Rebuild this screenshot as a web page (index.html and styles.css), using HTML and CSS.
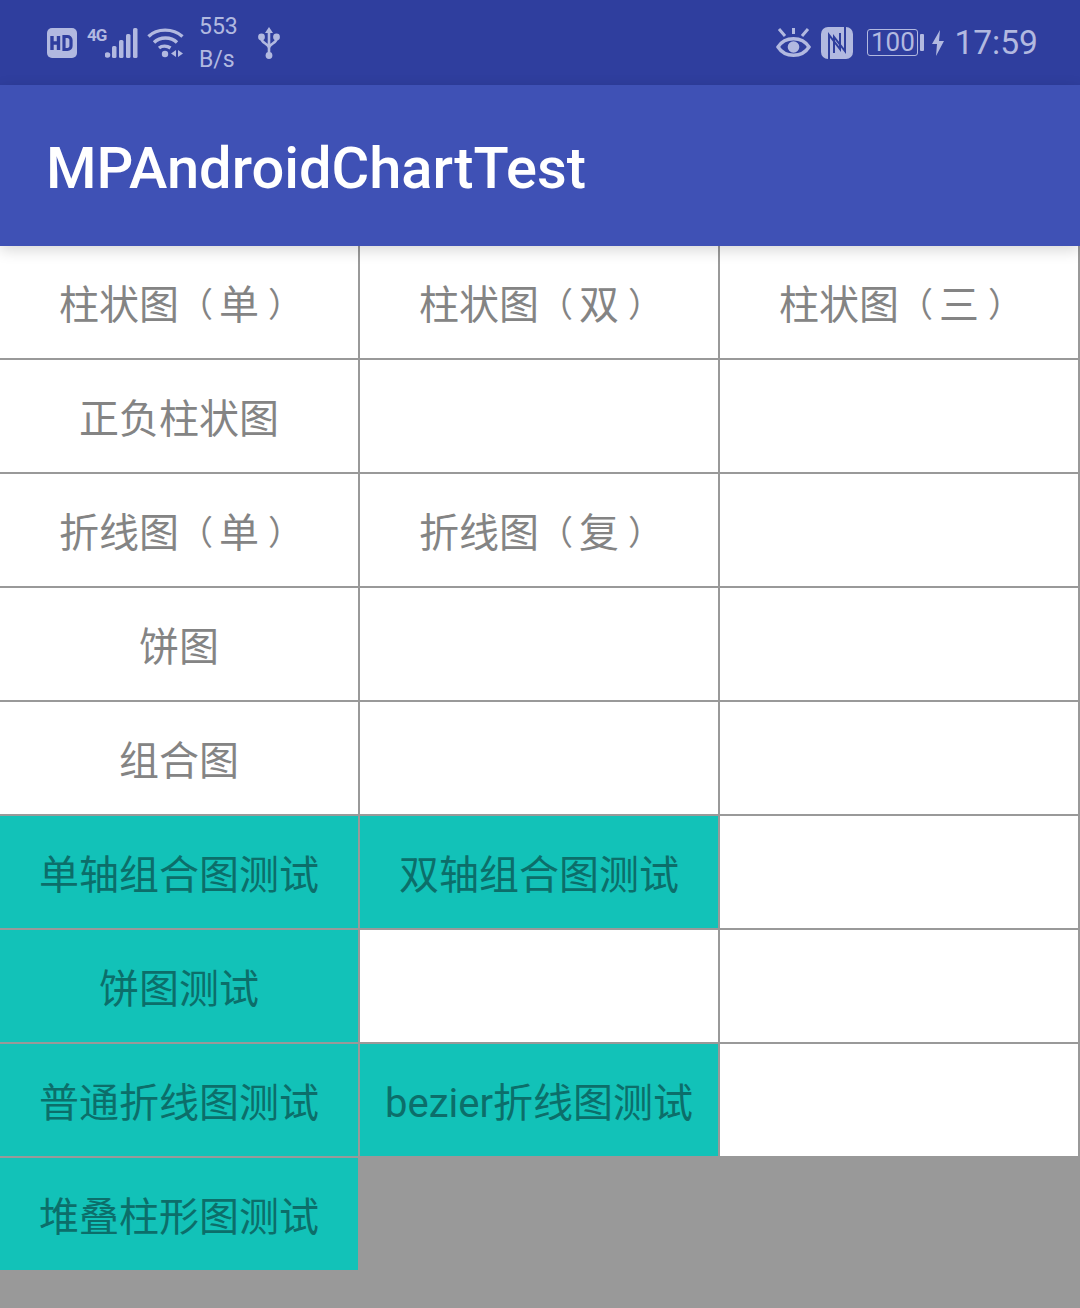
FILE: index.html
```html
<!DOCTYPE html>
<html lang="zh-CN">
<head>
    <meta charset="UTF-8">
    <title>MPAndroidChartTest</title>
    <link rel="stylesheet" href="styles.css">
</head>
<body>
    <div class="status-bar">
        <div class="status-left">
            <svg class="icon-hd" width="30" height="30" viewBox="0 0 30 30">
                <rect width="30" height="30" rx="5" fill="#b2b9e0"/>
                <path d="M5 8v14M11.500 8v14M5 15h6" stroke="#2f3e9e" stroke-width="3.400" fill="none"/>
                <path d="M17 8.500v13h3.500a3.500 3.500 0 0 0 3.500-3.500v-6a3.500 3.500 0 0 0-3.500-3.500z" stroke="#2f3e9e" stroke-width="3.200" fill="none"/>
            </svg>
            <div class="signal">
                <span class="net-type">4G</span>
                <svg class="bars" width="33" height="30" viewBox="0 0 33 30">
                    <circle cx="2.500" cy="27" r="2.800" fill="#b2b9e0"/>
                    <rect x="7" y="18" width="4.500" height="12" rx="1.500" fill="#b2b9e0"/>
                    <rect x="14" y="12" width="4.500" height="18" rx="1.500" fill="#b2b9e0"/>
                    <rect x="21" y="6" width="4.500" height="24" rx="1.500" fill="#b2b9e0"/>
                    <rect x="28" y="0" width="4.500" height="30" rx="1.500" fill="#b2b9e0"/>
                </svg>
            </div>
            <svg class="wifi" width="37" height="31" viewBox="0 0 37 31">
                <path d="M1.500 9.500C10 1 26 1 35.500 9.500M7 15.500C13 9.500 24 9.500 30 15.500M12 21C15 18.500 20 18.500 23.500 21" stroke="#b2b9e0" stroke-width="3.400" fill="none"/>
                <circle cx="18" cy="27" r="3.200" fill="#b2b9e0"/>
                <path d="M29 23v7l-5-3.500zM31 23v7l5-3.500z" fill="#b2b9e0"/>
            </svg>
            <div class="speed">
                <span>553</span>
                <span>B/s</span>
            </div>
            <svg class="usb" width="22" height="32" viewBox="0 0 22 32">
                <path d="M11 0l4 6h-8z" fill="#b2b9e0"/>
                <path d="M11 5v24M3.500 10v2c0 4 7.500 5 7.500 9M18.500 10v2c0 4-7.500 5-7.500 9" stroke="#b2b9e0" stroke-width="2.600" fill="none"/>
                <circle cx="3.500" cy="10" r="3.400" fill="#b2b9e0"/>
                <circle cx="18.500" cy="10" r="3.400" fill="#b2b9e0"/>
                <circle cx="11" cy="28.500" r="3.400" fill="#b2b9e0"/>
            </svg>
        </div>
        <div class="status-right">
            <svg class="eye" width="35" height="29" viewBox="0 0 35 29">
                <path d="M2 19C9 8 26 8 33 19C26 30 9 30 2 19Z" stroke="#b2b9e0" stroke-width="3.400" fill="none"/>
                <circle cx="17.500" cy="19" r="5.800" fill="#b2b9e0"/>
                <path d="M3 1l6 7M32 1l-6 7M17.500 0v6" stroke="#b2b9e0" stroke-width="3" fill="none"/>
            </svg>
            <svg class="nfc" width="32" height="32" viewBox="0 0 32 32">
                <rect width="32" height="32" rx="7" fill="#b2b9e0"/>
                <path d="M8 32V8L19 22V6M24 0V24L13 10V26" stroke="#2f3e9e" stroke-width="2" fill="none"/>
            </svg>
            <div class="battery">
                <div class="battery-body">100</div>
                <div class="battery-tip"></div>
            </div>
            <svg class="bolt" width="12" height="26" viewBox="0 0 12 26">
                <path d="M8 0L0 14h5L4 26l8-15H7z" fill="#b2b9e0"/>
            </svg>
            <span class="clock">17:59</span>
        </div>
    </div>

    <header class="app-bar">MPAndroidChartTest</header>

    <main class="grid">
        <div class="cell">柱状图<span class="paren-open">（</span>单<span class="paren-close">）</span></div>
        <div class="cell">柱状图<span class="paren-open">（</span>双<span class="paren-close">）</span></div>
        <div class="cell">柱状图<span class="paren-open">（</span>三<span class="paren-close">）</span></div>
        <div class="cell">正负柱状图</div>
        <div class="cell"></div>
        <div class="cell"></div>
        <div class="cell">折线图<span class="paren-open">（</span>单<span class="paren-close">）</span></div>
        <div class="cell">折线图<span class="paren-open">（</span>复<span class="paren-close">）</span></div>
        <div class="cell"></div>
        <div class="cell">饼图</div>
        <div class="cell"></div>
        <div class="cell"></div>
        <div class="cell">组合图</div>
        <div class="cell"></div>
        <div class="cell"></div>
        <div class="cell teal">单轴组合图测试</div>
        <div class="cell teal">双轴组合图测试</div>
        <div class="cell"></div>
        <div class="cell teal">饼图测试</div>
        <div class="cell"></div>
        <div class="cell"></div>
        <div class="cell teal">普通折线图测试</div>
        <div class="cell teal">bezier折线图测试</div>
        <div class="cell"></div>
        <div class="cell teal">堆叠柱形图测试</div>
    </main>
</body>
</html>
```

FILE: styles.css
```css
html, body {
    margin: 0;
    padding: 0;
}

body {
    width: 1080px;
    height: 1308px;
    overflow: hidden;
    background-color: #999999;
    font-family: Roboto, "Noto Sans CJK SC", sans-serif;
}

.status-bar {
    height: 85px;
    background-color: #2f3e9e;
    color: #b2b9e0;
    display: flex;
    justify-content: space-between;
    align-items: center;
    padding: 0 42px 0 47px;
}

.status-left,
.status-right {
    display: flex;
    align-items: center;
}

.signal {
    display: flex;
    align-items: flex-start;
    margin-left: 10px;
}

.net-type {
    width: 18px;
    font-size: 17px;
    font-weight: 700;
    letter-spacing: -1px;
    line-height: 14px;
}

.wifi {
    margin-left: 9px;
}

.speed {
    display: flex;
    flex-direction: column;
    width: 37px;
    font-size: 23px;
    line-height: 33px;
    margin-left: 15px;
}

.usb {
    margin-left: 22px;
}

.eye {
    margin-right: 10px;
}

.battery {
    display: flex;
    align-items: center;
    margin-left: 14px;
}

.battery-body {
    width: 49px;
    height: 25px;
    border: 1px solid #b2b9e0;
    border-radius: 3px;
    font-size: 26px;
    line-height: 25px;
    text-align: center;
}

.battery-tip {
    width: 4px;
    height: 17px;
    margin-left: 2px;
    background-color: #b2b9e0;
    border-radius: 1px;
}

.bolt {
    margin-left: 8px;
}

.clock {
    font-size: 33.600px;
    margin-left: 10px;
}

.app-bar {
    height: 161px;
    box-sizing: border-box;
    padding: 47px 0 0 46px;
    background-color: #3f51b5;
    color: #ffffff;
    font-size: 57.800px;
    font-weight: 500;
    line-height: 72px;
    box-shadow: 0 4px 14px rgba(0, 0, 0, 0.16);
    position: relative;
    z-index: 1;
}

.grid {
    display: grid;
    grid-template-columns: repeat(3, 358px);
    grid-auto-rows: 112px;
    gap: 2px;
}

.cell {
    background-color: #ffffff;
    color: #848484;
    font-size: 40px;
    display: flex;
    align-items: center;
    justify-content: center;
}

/* brackets are a bit smaller than the text and sit further from it */
.paren-open {
    font-size: 34px;
    margin-right: 6px;
}

.paren-close {
    font-size: 34px;
    margin-left: 9px;
    margin-right: -3px;
}

.teal {
    background-color: #12c2b8;
    color: #0c6e6a;
}
```
